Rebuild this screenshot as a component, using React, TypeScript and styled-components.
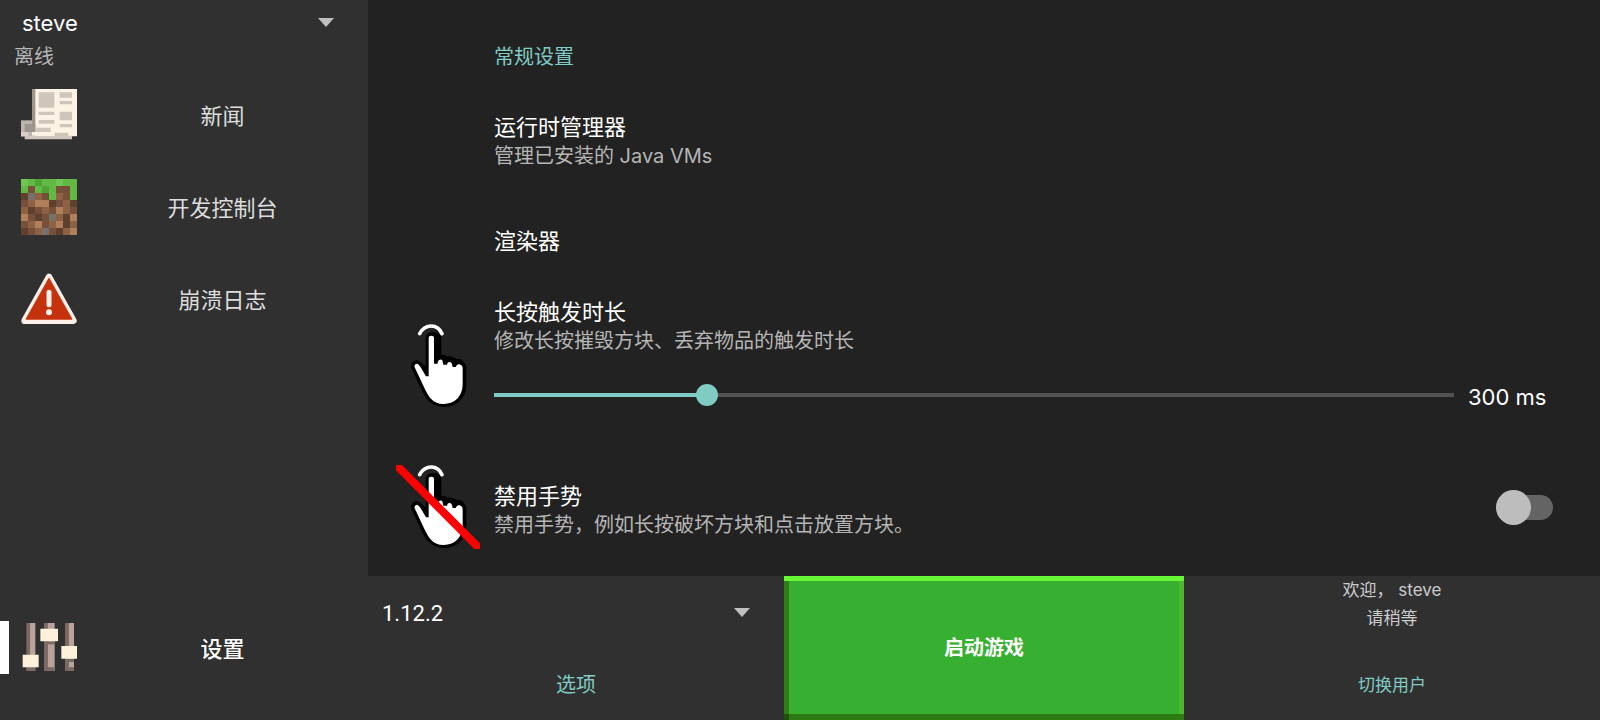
import React, { useState } from 'react';
import styled, { createGlobalStyle } from 'styled-components';

const accent = '#80cbc4';
const panel = '#303030';

const GlobalStyle = createGlobalStyle`
  *, *::before, *::after { box-sizing: border-box; }
  body {
    margin: 0;
    background: #222222;
    color: #ffffff;
    font-family: Inter, "Noto Sans CJK SC", sans-serif;
    font-size: 20px;
  }
  button, select, input { font: inherit; color: inherit; margin: 0; }
`;

const Page = styled.div`
  display: grid;
  grid-template-columns: 23% minmax(0, 1fr);
  min-height: 100vh;
`;

const Sidebar = styled.aside`
  display: flex;
  flex-direction: column;
  background: ${panel};
`;

const SpinnerBox = styled.div<{ $height: number }>`
  display: grid;
  grid-template-columns: minmax(0, 1fr) 16px 34px;
  align-items: center;
  height: ${p => p.$height}px;
`;

const SpinnerSelect = styled.select<{ $indent: number }>`
  grid-area: 1 / 1 / 2 / 4;
  width: 100%;
  height: 100%;
  padding: 0 0 0 ${p => p.$indent}px;
  border: 0;
  background: transparent;
  appearance: none;
  font-size: 22px;
  option { background: ${panel}; }
`;

const VersionSelect = styled(SpinnerSelect)`
  font-family: Roboto, "Noto Sans CJK SC", sans-serif;
`;

const CaretIcon = styled.svg`
  grid-area: 1 / 2 / 2 / 3;
  width: 16px;
  height: 9px;
  margin-bottom: 2px;
  fill: #c0c0c0;
  pointer-events: none;
`;

const AccountState = styled.p`
  margin: 0;
  padding-left: 14px;
  line-height: 23px;
  color: #b8b8b8;
`;

const Nav = styled.nav`
  flex: 1;
  display: flex;
  flex-direction: column;
  padding-bottom: 26px;
`;

const NavButton = styled.button<{ $active?: boolean }>`
  position: relative;
  display: flex;
  align-items: center;
  height: 92px;
  padding: 0 0 0 21px;
  border: 0;
  background: transparent;
  color: ${p => (p.$active ? '#ffffff' : '#dcdcdc')};
  font-size: 22px;
  font-weight: ${p => (p.$active ? 500 : 400)};
  margin-top: ${p => (p.$active ? 'auto' : '0')};
  &::before {
    content: "";
    display: ${p => (p.$active ? 'block' : 'none')};
    position: absolute;
    left: 0;
    top: 19px;
    width: 9px;
    height: 53px;
    background: #ffffff;
  }
`;

const NavIcon = styled.svg`
  width: 56px;
  height: 56px;
  flex: none;
`;

const NavLabel = styled.span`
  flex: 1;
  padding-bottom: 2px;
  text-align: center;
`;

const Content = styled.div`
  display: flex;
  flex-direction: column;
  min-width: 0;
`;

const Settings = styled.main`
  flex: 1;
  display: flex;
  flex-direction: column;
  padding: 43px 47px 0 28px;
`;

const SectionTitle = styled.h2`
  margin: 0 0 41px;
  padding-left: 98px;
  font-size: 20px;
  font-weight: 400;
  line-height: 28px;
  color: ${accent};
`;

const Preference = styled.section<{ $gap?: number }>`
  display: grid;
  grid-template-columns: 84px minmax(0, 1fr) auto;
  column-gap: 14px;
  margin-bottom: ${p => p.$gap ?? 0}px;
`;

const PreferenceBody = styled.div`
  grid-column: 2;
  align-self: end;
  min-width: 0;
  padding-bottom: ${p => (p as { $bottom?: number }).$bottom ?? 0}px;
`;

const GestureBody = styled(PreferenceBody)`
  padding-bottom: 10px;
`;

const WideBody = styled(PreferenceBody)`
  grid-column: 2 / 4;
`;

const Title = styled.label`
  display: block;
  margin: 0;
  font-size: 22px;
  font-weight: 400;
  line-height: 30px;
`;

const Summary = styled.p`
  margin: 0;
  line-height: 28px;
  color: #b5b5b5;
`;

const GestureIcon = styled.svg<{ $top?: number }>`
  grid-column: 1;
  grid-row: 1;
  width: 84px;
  height: 84px;
  margin-top: ${p => p.$top ?? 0}px;
`;

const SliderRow = styled.div`
  display: flex;
  align-items: center;
  gap: 14px;
  height: 40px;
  margin-top: 20px;
`;

const Slider = styled.input`
  flex: 1;
  min-width: 0;
  height: 22px;
  margin: 0 -11px;
  background: transparent;
  appearance: none;
  --fill: calc(11px + (100% - 22px) * var(--ratio));
  &::-webkit-slider-runnable-track {
    height: 4px;
    background: linear-gradient(
      to right,
      transparent 11px,
      ${accent} 11px,
      ${accent} var(--fill),
      #525252 var(--fill),
      #525252 calc(100% - 11px),
      transparent calc(100% - 11px)
    );
  }
  &::-webkit-slider-thumb {
    appearance: none;
    width: 22px;
    height: 22px;
    margin-top: -9px;
    border-radius: 50%;
    background: ${accent};
  }
`;

const SliderValue = styled.output`
  width: 85px;
  padding-top: 3px;
  font-size: 22px;
  white-space: nowrap;
`;

const Switch = styled.input`
  grid-column: 3;
  align-self: center;
  position: relative;
  width: 57px;
  height: 35px;
  appearance: none;
  &::before {
    content: "";
    position: absolute;
    inset: 5px 0;
    border-radius: 13px;
    background: #646464;
  }
  &::after {
    content: "";
    position: absolute;
    left: 0;
    top: 0;
    width: 35px;
    height: 35px;
    border-radius: 50%;
    background: #bdbdbd;
  }
  &:checked::after { left: 22px; background: ${accent}; }
`;

const BottomBar = styled.footer`
  display: grid;
  grid-template-columns: 26fr 25fr 26fr;
  height: 144px;
  background: ${panel};
`;

const BottomCell = styled.div`
  display: flex;
  flex-direction: column;
  min-width: 0;
`;

const TextButton = styled.button<{ $size: number }>`
  flex: 1;
  padding: 0 0 4px;
  border: 0;
  background: transparent;
  color: ${accent};
  font-size: ${p => p.$size}px;
`;

const Greeting = styled.p`
  margin: 0;
  font-size: 17px;
  line-height: 28px;
  text-align: center;
  color: #cccccc;
`;

const GreetingBox = styled.div`
  height: 74px;
`;

const PlayButton = styled.button`
  border: 0;
  padding: 0 0 4px;
  font-size: 20px;
  font-weight: 700;
  background:
    linear-gradient(#67f735, #67f735) top / 100% 5px no-repeat,
    linear-gradient(#1d5208, #1d5208) left bottom / 5px 6px no-repeat,
    linear-gradient(#2e7a12, #2e7a12) bottom / 100% 6px no-repeat,
    linear-gradient(#2f7d16, #2f7d16) left / 5px 100% no-repeat,
    linear-gradient(#4cb929, #4cb929) right / 5px 100% no-repeat,
    #37b031;
`;

const Caret = () => (
  <CaretIcon viewBox="0 0 16 9" aria-hidden="true">
    <path d="M0 0H16L8 9Z" />
  </CaretIcon>
);

const NewsIcon = () => (
  <NavIcon viewBox="33 36 168 168" aria-hidden="true">
    <path fill="#fdf3e4" d="M75 42H201V184H75Z" />
    <path fill="#9d948c" d="M66 42H76V184H66Z" />
    <path fill="#bcb5ad" d="M33 136H66V184H33Z" />
    <path fill="#9d958d" d="M44 147H76V171H44Z" />
    <path fill="#d9d1c8" d="M33 171H55V184H33Z" />
    <path fill="#cfc7be" d="M44 182H186V193H44Z" />
    <path fill="#fdf3e4" d="M66 171H136V182H66Z" />
    <path
      fill="#cfc5bb"
      d="M86 52H133V98H86ZM149 52H186V68H149ZM149 78H186V88H149ZM86 110H133V120H86ZM149 110H186V136H149ZM86 135H133V146H86ZM149 147H186V157H149ZM76 158H122V171H76ZM134 173H175V184H134Z"
    />
  </NavIcon>
);

const blockColors: Record<string, string> = {
  g: '#62b944',
  G: '#4da536',
  h: '#70c455',
  b: '#76503a',
  d: '#5f402d',
  m: '#8d6144',
  o: '#b27f5c',
  s: '#77716c',
};

const blockRows = [
  'hgGgghgg',
  'gbgGgbbg',
  'dsmbgmbg',
  'bmoodbmd',
  'mdbmbomb',
  'obdbsmdo',
  'bmobmodm',
  'dbmsbdmo',
];

const GrassIcon = () => (
  <NavIcon viewBox="0 0 8 8" shapeRendering="crispEdges" aria-hidden="true">
    {blockRows.map((row, y) =>
      [...row].map((c, x) => (
        <rect key={`${x}-${y}`} x={x} y={y} width="1" height="1" fill={blockColors[c]} />
      )),
    )}
  </NavIcon>
);

const WarningIcon = () => (
  <NavIcon viewBox="33 33 168 168" aria-hidden="true">
    <path
      d="M117 51L190 182H44Z"
      fill="#fff1ea"
      stroke="#fff1ea"
      strokeWidth="20"
      strokeLinejoin="round"
    />
    <path d="M117 56L185 177H49Z" fill="#c5330e" stroke="#c5330e" strokeWidth="4" strokeLinejoin="round" />
    <path d="M117 97V134" stroke="#fff1ea" strokeWidth="15" strokeLinecap="round" />
    <circle cx="117" cy="157" r="9" fill="#fff1ea" />
  </NavIcon>
);

const SlidersIcon = () => (
  <NavIcon viewBox="63 30 168 168" aria-hidden="true">
    <path fill="#7c6862" d="M79 39H90V182H79ZM132 39H143V182H132ZM195 39H206V182H195Z" />
    <path fill="#b9a299" d="M90 39H106V182H90ZM143 39H164V182H143ZM206 39H222V182H206Z" />
    <path fill="#7c6862" d="M79 172H106V182H79ZM132 94H164V103H132ZM132 172H164V182H132ZM195 146H222V156H195ZM195 172H222V182H195Z" />
    <path fill="#fdf1dc" d="M68 134H116V172H68ZM121 56H174V94H121ZM184 108H231V146H184Z" />
  </NavIcon>
);

const Hand = ({ top, crossed }: { top?: number; crossed?: boolean }) => (
  <GestureIcon $top={top} viewBox="18 42 252 252" aria-hidden="true">
    <path
      d="M124 84V198L112 198L80 168L104 220L121 254Q138 274 162 274Q190 274 205 252Q212 240 212 224V172L206 164L197 172L190 160L178 156L170 164L160 152L148 150L137 160V84Z"
      fill="#000000"
      stroke="#000000"
      strokeWidth="34"
      strokeLinejoin="round"
    />
    <path
      d="M116 84Q116 77 124 77Q132 77 132 84V161H143V156Q148 144 157 151L160 164H171Q172 153 182 157Q187 160 188 171H197Q200 161 209 163Q218 166 218 176V225Q217 249 203 265Q187 282 161 282Q136 282 120 263Q112 253 105 238L74 172Q72 162 81 161Q86 162 91 170L108 199H116Z"
      fill="#ffffff"
    />
    <path d="M89 71Q101 48 124 48Q146 48 156 71" fill="none" stroke="#ffffff" strokeWidth="11" strokeLinecap="round" />
    {crossed && <path d="M27 50L262 286" stroke="#ff0000" strokeWidth="24" strokeLinecap="round" />}
  </GestureIcon>
);

export default function App() {
  const [delay, setDelay] = useState(300);
  const ratio = { '--ratio': (delay - 100) / 900 } as React.CSSProperties;

  return (
    <>
      <GlobalStyle />
      <Page>
        <Sidebar>
          <SpinnerBox $height={46}>
            <SpinnerSelect $indent={22} aria-label="账户">
              <option>steve</option>
            </SpinnerSelect>
            <Caret />
          </SpinnerBox>
          <AccountState>离线</AccountState>
          <Nav>
            <NavButton type="button">
              <NewsIcon />
              <NavLabel>新闻</NavLabel>
            </NavButton>
            <NavButton type="button">
              <GrassIcon />
              <NavLabel>开发控制台</NavLabel>
            </NavButton>
            <NavButton type="button">
              <WarningIcon />
              <NavLabel>崩溃日志</NavLabel>
            </NavButton>
            <NavButton type="button" $active aria-current="page">
              <SlidersIcon />
              <NavLabel>设置</NavLabel>
            </NavButton>
          </Nav>
        </Sidebar>
        <Content>
          <Settings>
            <SectionTitle>常规设置</SectionTitle>
            <Preference $gap={56}>
              <PreferenceBody>
                <Title as="h3">运行时管理器</Title>
                <Summary>管理已安装的 Java VMs</Summary>
              </PreferenceBody>
            </Preference>
            <Preference $gap={41}>
              <PreferenceBody>
                <Title as="h3">渲染器</Title>
              </PreferenceBody>
            </Preference>
            <Preference $gap={50}>
              <Hand top={27} />
              <WideBody>
                <Title htmlFor="delay">长按触发时长</Title>
                <Summary>修改长按摧毁方块、丢弃物品的触发时长</Summary>
                <SliderRow>
                  <Slider
                    id="delay"
                    type="range"
                    min={100}
                    max={1000}
                    step={10}
                    value={delay}
                    onChange={e => setDelay(Number(e.target.value))}
                    style={ratio}
                  />
                  <SliderValue htmlFor="delay">{delay} ms</SliderValue>
                </SliderRow>
              </WideBody>
            </Preference>
            <Preference>
              <Hand crossed />
              <GestureBody>
                <Title htmlFor="gestures">禁用手势</Title>
                <Summary>禁用手势，例如长按破坏方块和点击放置方块。</Summary>
              </GestureBody>
              <Switch id="gestures" type="checkbox" role="switch" />
            </Preference>
          </Settings>
          <BottomBar>
            <BottomCell>
              <SpinnerBox $height={74}>
                <VersionSelect $indent={14} aria-label="版本">
                  <option>1.12.2</option>
                </VersionSelect>
                <Caret />
              </SpinnerBox>
              <TextButton type="button" $size={20}>选项</TextButton>
            </BottomCell>
            <PlayButton type="button">启动游戏</PlayButton>
            <BottomCell>
              <GreetingBox>
                <Greeting>欢迎， steve</Greeting>
                <Greeting>请稍等</Greeting>
              </GreetingBox>
              <TextButton type="button" $size={17}>切换用户</TextButton>
            </BottomCell>
          </BottomBar>
        </Content>
      </Page>
    </>
  );
}
